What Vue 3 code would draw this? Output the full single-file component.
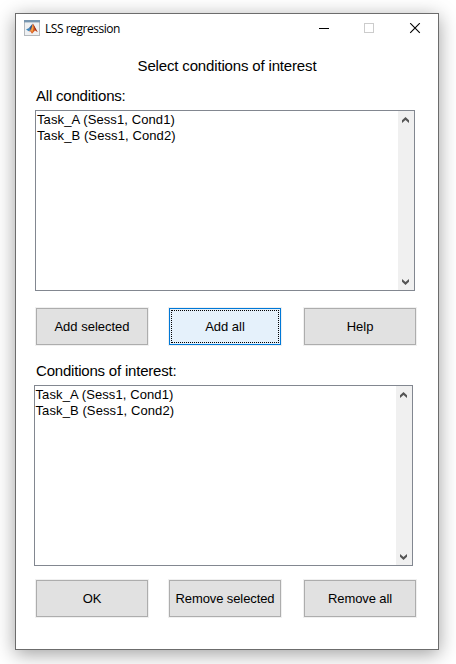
<script setup>
const tasks = ['Task_A (Sess1, Cond1)', 'Task_B (Sess1, Cond2)']
const addButtons = [
  { label: 'Add selected' },
  { label: 'Add all', focused: true },
  { label: 'Help' },
]
const removeButtons = [
  { label: 'OK' },
  { label: 'Remove selected' },
  { label: 'Remove all' },
]
</script>

<template>
  <div class="desktop">
    <main class="window">
      <header class="titlebar">
        <svg class="logo" width="16" height="16" viewBox="0 0 16 16">
          <rect x="0.5" y="0.5" width="15" height="15" fill="#eef0f2" stroke="#b4b8bc" />
          <rect x="0" y="0" width="16" height="2.4" fill="#7896b0" />
          <path d="M2 9.5 5 8 6.6 10.3 4.8 11.3Z" fill="#3c86bc" />
          <path d="M5 8 8.7 3.6 8 8.5 6.6 10.3Z" fill="#285a94" />
          <path d="M4.8 11.3 6.6 10.3 9 3.5 10.2 6 13.6 12 11 10.6 8 13.8 6.6 11.4Z" fill="#d65a22" />
          <path d="M9 4 9.4 8 8.3 12.8 7 10.6Z" fill="#f3a545" />
          <path d="M9.3 4 13.6 12 10.8 9.6Z" fill="#8e2b20" />
        </svg>
        <h1 class="title">LSS regression</h1>
        <svg class="control" width="12" height="12" viewBox="0 0 12 12" shape-rendering="crispEdges">
          <path d="M1 5.5H11" stroke="#000" />
        </svg>
        <svg class="control" width="12" height="12" viewBox="0 0 12 12" shape-rendering="crispEdges">
          <path d="M1.5 0.5H10.5V9.5H1.5Z" fill="none" stroke="#ccc" />
        </svg>
        <svg class="control close" width="12" height="12" viewBox="0 0 12 12">
          <path d="M1.2 0.2 10.8 9.8M10.8 0.2 1.2 9.8" stroke="#000" stroke-width="1.15" />
        </svg>
      </header>

      <p class="prompt">Select conditions of interest</p>

      <p class="label">All conditions:</p>
      <section class="listbox">
        <ul class="items">
          <li v-for="t in tasks" :key="t">{{ t }}</li>
        </ul>
        <div class="scrollbar">
          <svg width="7" height="6" viewBox="0 0 7 6"><path d="M0 3.2 3.5 0 7 3.2V6L3.5 3 0 6Z" fill="#555" /></svg>
          <svg width="7" height="6" viewBox="0 0 7 6"><path d="M0 2.8 3.5 6 7 2.8V0L3.5 3 0 0Z" fill="#555" /></svg>
        </div>
      </section>

      <div class="buttons add">
        <button v-for="b in addButtons" :key="b.label" :class="{ focused: b.focused }">
          <span>{{ b.label }}</span>
        </button>
      </div>

      <p class="label chosen-label">Conditions of interest:</p>
      <section class="listbox chosen">
        <ul class="items">
          <li v-for="t in tasks" :key="t">{{ t }}</li>
        </ul>
        <div class="scrollbar">
          <svg width="7" height="6" viewBox="0 0 7 6"><path d="M0 3.2 3.5 0 7 3.2V6L3.5 3 0 6Z" fill="#555" /></svg>
          <svg width="7" height="6" viewBox="0 0 7 6"><path d="M0 2.8 3.5 6 7 2.8V0L3.5 3 0 0Z" fill="#555" /></svg>
        </div>
      </section>

      <div class="buttons remove">
        <button v-for="b in removeButtons" :key="b.label">
          <span>{{ b.label }}</span>
        </button>
      </div>
    </main>
  </div>
</template>

<style>
body {
  background: #fff;
  overflow: hidden;
}
</style>

<style scoped>
* {
  box-sizing: border-box;
  margin: 0;
  padding: 0;
}
.desktop {
  width: 456px;
  height: 664px;
  padding: 13px 17px 14px 15px;
  overflow: hidden;
  font-family: "Liberation Sans", Arial, sans-serif;
  color: #000;
}
.window {
  display: flex;
  flex-direction: column;
  width: 424px;
  height: 637px;
  border: 1px solid #6c6c6c;
  background: #fff;
  box-shadow: 0 4px 18px rgba(0, 0, 0, 0.38);
}
.titlebar {
  display: flex;
  align-items: center;
  height: 30px;
  padding: 0 18px 0 8px;
}
.logo {
  margin: 0 5px 2px 0;
}
.title {
  flex: 1;
  font: 400 12px/16px "Open Sans", "Noto Sans", sans-serif;
  letter-spacing: -0.46px;
}
.control + .control {
  margin-left: 33px;
}
.control.close {
  margin: 0 -1px 0 34px;
}
.prompt {
  height: 20px;
  margin-top: 12px;
  font-size: 15px;
  line-height: 20px;
  letter-spacing: -0.16px;
  text-align: center;
}
.label {
  height: 20px;
  margin: 10px 0 0 20px;
  font-size: 15px;
  line-height: 20px;
  letter-spacing: -0.2px;
}
.listbox {
  display: flex;
  justify-content: space-between;
  width: 380px;
  height: 181px;
  margin: 4px 0 0 19px;
  border: 1px solid #828790;
}
.items {
  padding: 1px;
  list-style: none;
  font-size: 13px;
  line-height: 16px;
  letter-spacing: 0.1px;
}
.scrollbar {
  display: flex;
  flex-direction: column;
  align-items: center;
  justify-content: space-between;
  width: 16px;
  padding: 6px 1px 5px 0;
  background: #f0f0f0;
}
.buttons {
  display: grid;
  grid-template-columns: 112px 112px 112px;
  column-gap: 21px;
  height: 37px;
  margin: 17px 0 0 20px;
}
.buttons button:last-child {
  margin: 0 -2px 0 2px;
}
button {
  display: flex;
  align-items: center;
  justify-content: center;
  border: 1px solid #adadad;
  box-shadow: 0 0 0 1px #f0f0f0;
  background: #e1e1e1;
  color: #000;
  font: 13px/16px "Liberation Sans", Arial, sans-serif;
  white-space: nowrap;
}
.focused {
  padding: 1px;
  border-color: #0078d7;
  background: #e5f1fb;
}
.focused span {
  display: flex;
  align-items: center;
  justify-content: center;
  width: 100%;
  height: 100%;
  border: 1px dotted #000;
}
.remove button {
  letter-spacing: -0.1px;
}
.chosen-label {
  margin-top: 16px;
}
.chosen {
  width: 379px;
  margin-left: 18px;
}
.chosen .items {
  padding-left: 0.5px;
}
.remove {
  margin-top: 14px;
}
</style>
